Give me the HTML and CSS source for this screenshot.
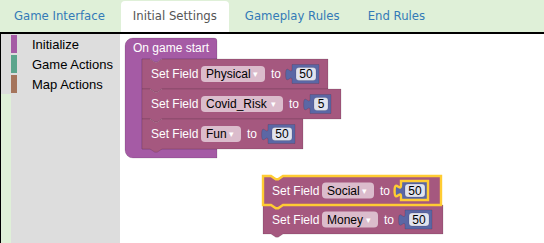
FILE: index.html
```html
<!DOCTYPE html>
<html lang="en">
<head>
    <meta charset="UTF-8">
    <meta name="viewport" content="width=device-width, initial-scale=1.0">
    <title>Game Editor - Initial Settings</title>
    <link rel="stylesheet" href="styles.css">
</head>
<body>
    <nav class="tabs">
        <a class="tab" href="#">Game Interface</a>
        <a class="tab active" href="#">Initial Settings</a>
        <a class="tab" href="#">Gameplay Rules</a>
        <a class="tab" href="#">End Rules</a>
    </nav>

    <div class="editor">
        <div class="toolbox">
            <div class="category"><span class="swatch init"></span>Initialize</div>
            <div class="category"><span class="swatch game"></span>Game Actions</div>
            <div class="category"><span class="swatch map"></span>Map Actions</div>
        </div>

        <svg class="workspace" viewBox="120 34 424 209" width="424" height="209">
            <!-- on game start -->
            <g class="block hat">
                <path d="M125,46 a8,8 0 0 1 8,-8 H214 a3,3 0 0 1 3,3 V59 H162 l-4.8,3.2 h-2.4 l-4.8,-3.2 H142 V149 H217 V158 H133 a8,8 0 0 1 -8,-8 Z"/>
                <text class="label" x="133" y="52">On game start</text>
            </g>

            <g class="block field">
                <path d="M142,59 H150 l4.8,3.2 h2.4 l4.8,-3.2 H328 V89 H162 l-4.8,3.2 h-2.4 l-4.8,-3.2 H142 Z"/>
                <text class="label" x="151" y="78">Set Field</text>
                <rect class="pill" x="201" y="66" width="64" height="16" rx="4"/>
                <text class="value" x="206" y="78">Physical</text>
                <text class="arrow" x="253" y="77">▾</text>
                <text class="label" x="271" y="78">to</text>
            </g>
            <g class="block number">
                <path d="M292,64.5 v4 c0,8 -6.4,-6.4 -6.4,6 s6.4,-2 6.4,6 V83.5 H319 V64.5 Z"/>
                <rect class="num-field" x="296" y="67.5" width="20" height="13" rx="3"/>
                <text class="value mid" x="306" y="78">50</text>
            </g>

            <g class="block field">
                <path d="M142,89 H150 l4.8,3.2 h2.4 l4.8,-3.2 H341 V119 H162 l-4.8,3.2 h-2.4 l-4.8,-3.2 H142 Z"/>
                <text class="label" x="151" y="108">Set Field</text>
                <rect class="pill" x="201" y="96" width="82" height="16" rx="4"/>
                <text class="value" x="206" y="108">Covid_Risk</text>
                <text class="arrow" x="271" y="107">▾</text>
                <text class="label" x="289" y="108">to</text>
            </g>
            <g class="block number">
                <path d="M310,94.5 v4 c0,8 -6.4,-6.4 -6.4,6 s6.4,-2 6.4,6 V113.5 H331 V94.5 Z"/>
                <rect class="num-field" x="314" y="97.5" width="14" height="13" rx="3"/>
                <text class="value mid" x="321" y="108">5</text>
            </g>

            <g class="block field">
                <path d="M142,119 H150 l4.8,3.2 h2.4 l4.8,-3.2 H303 V149 H162 l-4.8,3.2 h-2.4 l-4.8,-3.2 H142 Z"/>
                <text class="label" x="151" y="138">Set Field</text>
                <rect class="pill" x="201" y="126" width="40" height="16" rx="4"/>
                <text class="value" x="206" y="138">Fun</text>
                <text class="arrow" x="229" y="137">▾</text>
                <text class="label" x="247" y="138">to</text>
            </g>
            <g class="block number">
                <path d="M268,124.5 v4 c0,8 -6.4,-6.4 -6.4,6 s6.4,-2 6.4,6 V143.5 H295 V124.5 Z"/>
                <rect class="num-field" x="272" y="127.5" width="20" height="13" rx="3"/>
                <text class="value mid" x="282" y="138">50</text>
            </g>

            <!-- loose stack -->
            <g class="block field">
                <path d="M263,205 H271 l4.8,3.2 h2.4 l4.8,-3.2 H443 V234 H283 l-4.8,3.2 h-2.4 l-4.8,-3.2 H263 Z"/>
                <text class="label" x="272" y="223.5">Set Field</text>
                <rect class="pill" x="322" y="211.5" width="56" height="16" rx="4"/>
                <text class="value" x="327" y="223.5">Money</text>
                <text class="arrow" x="366" y="222.5">▾</text>
                <text class="label" x="384" y="223.5">to</text>
            </g>
            <g class="block number">
                <path d="M405,210 v4 c0,8 -6.4,-6.4 -6.4,6 s6.4,-2 6.4,6 V229 H432 V210 Z"/>
                <rect class="num-field" x="409" y="213" width="20" height="13" rx="3"/>
                <text class="value mid" x="419" y="223.5">50</text>
            </g>

            <g class="block field selected">
                <path d="M263,176 H271 l4.8,3.2 h2.4 l4.8,-3.2 H441 V205 H283 l-4.8,3.2 h-2.4 l-4.8,-3.2 H263 Z"/>
                <text class="label" x="272" y="194.5">Set Field</text>
                <rect class="pill" x="322" y="182.5" width="52" height="16" rx="4"/>
                <text class="value" x="327" y="194.5">Social</text>
                <text class="arrow" x="362" y="193.5">▾</text>
                <text class="label" x="380" y="194.5">to</text>
            </g>
            <g class="block number selected">
                <path d="M401,181 v4 c0,8 -6.4,-6.4 -6.4,6 s6.4,-2 6.4,6 V200 H428 V181 Z"/>
                <rect class="num-field" x="405" y="184" width="20" height="13" rx="3"/>
                <text class="value mid" x="415" y="194.5">50</text>
            </g>
        </svg>
    </div>
</body>
</html>
```

FILE: styles.css
```css
body {
    margin: 0;
    background-color: #dff0d8;
    overflow: hidden;
}

.tabs {
    display: flex;
    align-items: flex-end;
    height: 32px;
    padding-left: 2px;
    font-family: "DejaVu Sans", sans-serif;
    font-size: 11.7px;
}

.tab {
    height: 31px;
    line-height: 31px;
    padding: 0 12px;
    margin-right: 4px;
    color: #337ab7;
    text-decoration: none;
}

.tab.active {
    background: #fff;
    color: #555;
    border-radius: 4px 4px 0 0;
}

.editor {
    display: flex;
    height: 209px;
    border-top: 2px solid #000;
    border-left: 1px solid #000;
}

.toolbox {
    width: 119px;
    background: linear-gradient(to right, #dff0d8 10px, #dddddd 10px);
    font-family: "Liberation Sans", Arial, sans-serif;
    font-size: 13px;
    color: #000;
}

.category {
    display: flex;
    align-items: center;
    height: 20px;
    background: #ddd;
}

.swatch {
    width: 6px;
    height: 18px;
    margin-left: 10px;
    margin-right: 15px;
}

.swatch.init { background: #a55ba5; }
.swatch.game { background: #5ba58c; }
.swatch.map  { background: #a5745b; }

.workspace {
    display: block;
    background: #fff;
    font-family: "Liberation Sans", Arial, sans-serif;
    font-size: 12px;
}

.block path {
    stroke: rgba(0, 0, 0, 0.15);
    stroke-width: 0.8;
}

.hat path    { fill: #a55ba5; }
.field path  { fill: #a5587f; }
.number path { fill: #5b67a5; }

.block.selected path {
    stroke: #fc3;
    stroke-width: 2.4;
}

.label { fill: #fff; }
.value { fill: #000; }
.mid   { text-anchor: middle; }

.pill {
    fill: #fff;
    fill-opacity: 0.6;
}

.arrow {
    fill: #fff;
    font-size: 9px;
}

.num-field {
    fill: #fff;
    fill-opacity: 0.82;
    stroke: rgba(0, 0, 0, 0.2);
    stroke-width: 0.6;
}
```
